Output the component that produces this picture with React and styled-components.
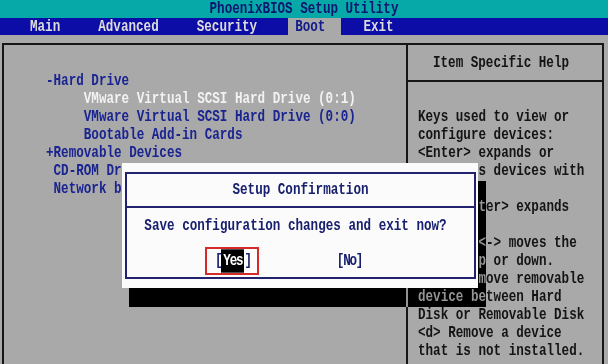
import React from 'react';
import styled, { createGlobalStyle } from 'styled-components';

const BIOS_FONT = `'Liberation Mono', 'DejaVu Sans Mono', monospace`;
const GRAY = '#a9a9a9';
const NAVY = '#1a2490';

const GlobalStyle = createGlobalStyle`
  html, body {
    margin: 0;
    padding: 0;
    background: ${GRAY};
    overflow: hidden;
  }
`;

const Screen = styled.div`
  position: relative;
  width: 608px;
  height: 364px;
  display: flex;
  flex-direction: column;
  background: ${GRAY};
  font-family: ${BIOS_FONT};
  font-size: 12.6px;
  font-weight: 700;
  overflow: hidden;
`;

// bios glyphs are tall and narrow
const Stretch = styled.span`
  display: inline-block;
  white-space: pre;
  transform: scaleY(1.3);
`;

const TitleBar = styled.header`
  height: 18px;
  line-height: 18px;
  text-align: center;
  background: #06a8a8;
  color: #0c1670;
`;

const MenuBar = styled.nav`
  height: 17px;
  display: flex;
  gap: 15px;
  padding-left: 23px;
  background: #0c0ca6;
`;

const MenuItem = styled.span`
  display: flex;
  align-items: center;
  padding: 0 16px 0 7px;
  color: ${p => (p.$active ? '#121a8a' : '#dcdcdc')};
  background: ${p => (p.$active ? GRAY : 'transparent')};
`;

const Workspace = styled.main`
  flex: 1;
  min-height: 0;
  display: flex;
  padding: 8px 4px 0 2px;
`;

const Frame = styled.section`
  flex: 1;
  display: grid;
  grid-template-columns: 402px 196px;
  border: 2px solid #161616;
  border-bottom: none;
`;

const ListPanel = styled.div`
  padding: 27px 0 0 42px;
`;

const Line = styled.div`
  height: 18px;
  line-height: 18px;
  white-space: pre;
  padding-left: ${p => p.$indent || 0}ch;
  color: ${p => p.$color || NAVY};
  transform: scaleY(1.3);
`;

const HelpPanel = styled.aside`
  display: flex;
  flex-direction: column;
  border-left: 2px solid #161616;
`;

const HelpHeader = styled.div`
  height: 35px;
  display: flex;
  align-items: center;
  justify-content: center;
  padding-right: 8px;
  border-bottom: 2px solid #161616;
  color: #141414;
`;

const HelpBody = styled.div`
  padding: 26px 0 0 10px;
`;

const DialogShadow = styled.div`
  position: absolute;
  left: 129px;
  top: 181px;
  width: 357px;
  height: 126px;
  background: ${GRAY};
  mix-blend-mode: difference;
`;

const Dialog = styled.div`
  position: absolute;
  left: 122px;
  top: 163px;
  width: 356px;
  height: 125px;
  box-sizing: border-box;
  padding: 9px 2px 9px 3px;
  background: #fbfbfb;
`;

const DialogBox = styled.div`
  height: 100%;
  box-sizing: border-box;
  display: flex;
  flex-direction: column;
  border: 2px solid #22226e;
  color: #18206e;
`;

const DialogTitle = styled.div`
  height: 32px;
  display: flex;
  align-items: center;
  justify-content: center;
  border-bottom: 2px solid #22226e;
`;

const Message = styled.div`
  padding: 9px 10px 0 0;
  height: 18px;
  line-height: 18px;
  text-align: center;
`;

const ButtonRow = styled.div`
  margin-top: 12px;
  display: flex;
  align-items: center;
  gap: 78px;
  padding-left: 78px;
`;

const Focus = styled.div`
  padding: 3px 6px 3px 8px;
  border: 2px solid #d42a2a;
`;

const Button = styled.span`
  display: inline-block;
  height: 18px;
  line-height: 18px;
  letter-spacing: -1.2px;
  color: #18206e;
`;

const Selected = styled.span`
  display: inline-block;
  padding: 0 2px;
  background: #000;
  color: #fff;
`;

const helpLines = [
  'Keys used to view or',
  'configure devices:',
  '<Enter> expands or',
  'collapses devices with',
  'a + or -',
  '<Ctrl+Enter> expands',
  'all',
  '<+> and <-> moves the',
  'device up or down.',
  '<n> May move removable',
  'device between Hard',
  'Disk or Removable Disk',
  '<d> Remove a device',
  'that is not installed.',
];

const bootItems = [
  { text: '-Hard Drive' },
  { text: 'VMware Virtual SCSI Hard Drive (0:1)', indent: 5, color: '#f2f2f2' },
  { text: 'VMware Virtual SCSI Hard Drive (0:0)', indent: 5 },
  { text: 'Bootable Add-in Cards', indent: 5 },
  { text: '+Removable Devices' },
  { text: 'CD-ROM Drive', indent: 1 },
  { text: 'Network boot from VMware VMXNET3', indent: 1 },
];

const menu = ['Main', 'Advanced', 'Security', 'Boot', 'Exit'];

const App = () => (
  <Screen>
    <GlobalStyle />
    <TitleBar>
      <Stretch>PhoenixBIOS Setup Utility</Stretch>
    </TitleBar>
    <MenuBar>
      {menu.map(m => (
        <MenuItem key={m} $active={m === 'Boot'}>
          <Stretch>{m}</Stretch>
        </MenuItem>
      ))}
    </MenuBar>
    <Workspace>
      <Frame>
        <ListPanel>
          {bootItems.map(item => (
            <Line key={item.text} $indent={item.indent} $color={item.color}>
              {item.text}
            </Line>
          ))}
        </ListPanel>
        <HelpPanel>
          <HelpHeader>
            <Stretch>Item Specific Help</Stretch>
          </HelpHeader>
          <HelpBody>
            {helpLines.map(l => (
              <Line key={l} $color="#141414">
                {l}
              </Line>
            ))}
          </HelpBody>
        </HelpPanel>
      </Frame>
    </Workspace>

    <DialogShadow />
    <Dialog>
      <DialogBox>
        <DialogTitle>
          <Stretch>Setup Confirmation</Stretch>
        </DialogTitle>
        <Message>
          <Stretch>Save configuration changes and exit now?</Stretch>
        </Message>
        <ButtonRow>
          <Focus>
            <Button>
              <Stretch>
                [<Selected>Yes</Selected>]
              </Stretch>
            </Button>
          </Focus>
          <Button>
            <Stretch>[No]</Stretch>
          </Button>
        </ButtonRow>
      </DialogBox>
    </Dialog>
  </Screen>
);

export default App;
